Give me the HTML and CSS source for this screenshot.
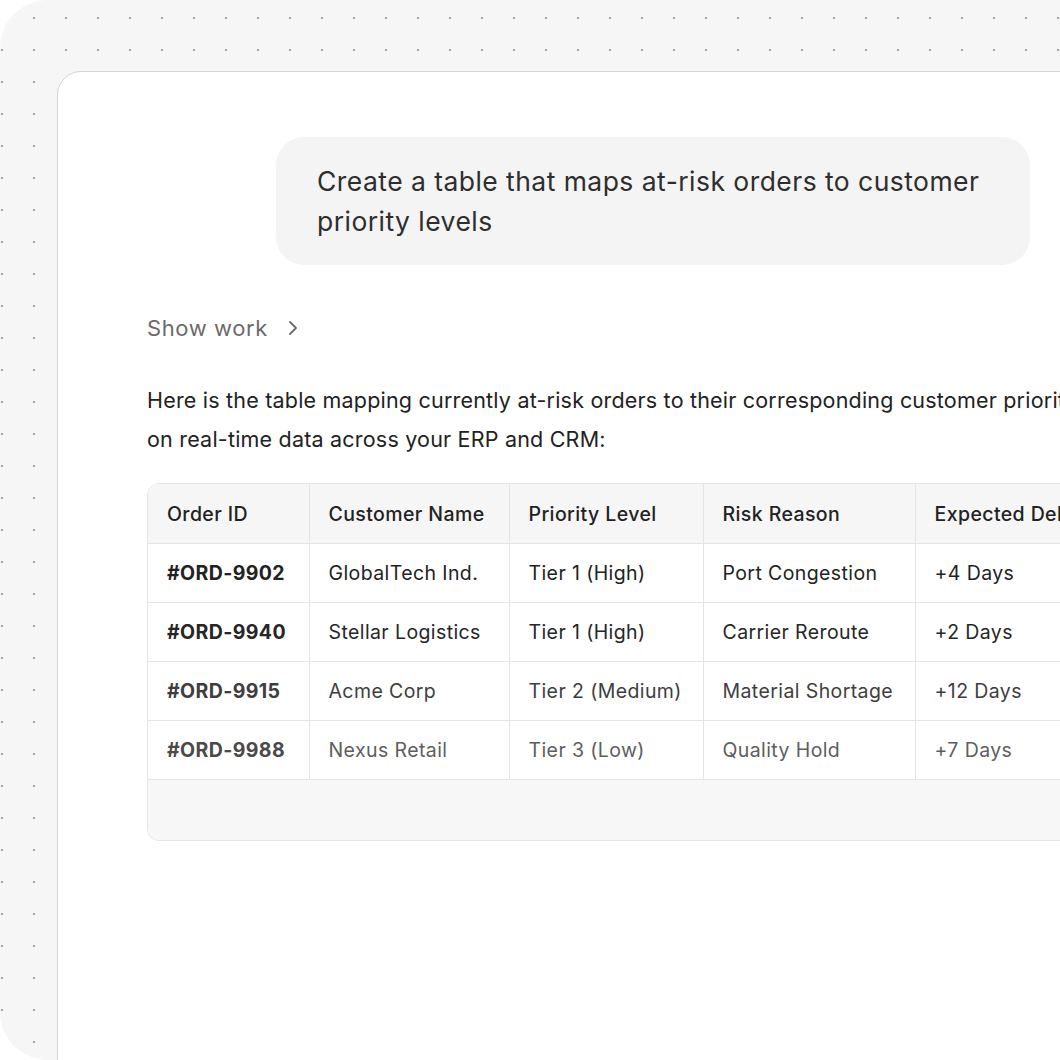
FILE: index.html
```html
<!DOCTYPE html>
<html>
<head>
<meta charset="utf-8">
<link rel="stylesheet" href="styles.css">
</head>
<body>
<div class="frame">
  <div class="card">
    <div class="bubble">Create a table that maps at-risk orders to customer priority levels</div>
    <div class="show-work">
      <span>Show work</span>
      <svg class="chev" width="10" height="16" viewBox="0 0 10 16"><path d="M2 2 L8 8 L2 14" fill="none" stroke="#6b6b6b" stroke-width="1.8" stroke-linecap="round" stroke-linejoin="round"/></svg>
    </div>
    <p class="answer">Here is the table mapping currently at-risk orders to their corresponding customer priority levels, based<br>on real-time data across your ERP and CRM:</p>
    <div class="table-wrap">
      <table class="orders">
        <colgroup>
          <col class="c1"><col class="c2"><col class="c3"><col class="c4"><col class="c5">
        </colgroup>
        <thead>
          <tr><th>Order ID</th><th>Customer Name</th><th>Priority Level</th><th>Risk Reason</th><th>Expected Delay</th></tr>
        </thead>
        <tbody>
          <tr class="r1"><td class="id">#ORD-9902</td><td>GlobalTech Ind.</td><td>Tier 1 (High)</td><td>Port Congestion</td><td>+4 Days</td></tr>
          <tr class="r2"><td class="id">#ORD-9940</td><td>Stellar Logistics</td><td>Tier 1 (High)</td><td>Carrier Reroute</td><td>+2 Days</td></tr>
          <tr class="r3"><td class="id">#ORD-9915</td><td>Acme Corp</td><td>Tier 2 (Medium)</td><td>Material Shortage</td><td>+12 Days</td></tr>
          <tr class="r4"><td class="id">#ORD-9988</td><td>Nexus Retail</td><td>Tier 3 (Low)</td><td>Quality Hold</td><td>+7 Days</td></tr>
        </tbody>
      </table>
      <div class="table-foot"></div>
    </div>
  </div>
</div>
</body>
</html>
```

FILE: styles.css
```css
* { box-sizing: border-box; }
html, body { margin: 0; padding: 0; background: #ffffff; }
body { font-family: Inter, "Noto Sans", "Liberation Sans", sans-serif; }

.frame {
  width: 1060px;
  height: 1060px;
  overflow: hidden;
  background-color: #f6f6f6;
  background-image: radial-gradient(circle, #a9a9a9 1.1px, rgba(169,169,169,0) 1.6px);
  background-size: 32px 32px;
  background-position: -14px 2px;
  border-radius: 48px 0 0 48px;
  padding: 71px 0 0 57px;
}

.card {
  width: 1200px;
  height: 1100px;
  background: #ffffff;
  border: 1px solid #d4d4d4;
  border-top-left-radius: 24px;
  padding: 65px 0 0 89px;
}

.bubble {
  margin-left: 129px;
  width: 754px;
  background: #f4f4f4;
  border-radius: 28px;
  padding: 24px 40px 24px 41px;
  font-size: 26.5px;
  line-height: 40px;
  color: #2e2e2e;
  letter-spacing: 0.45px;
}

.show-work {
  margin-top: 48px;
  display: flex;
  align-items: center;
  gap: 20px;
  font-size: 22px;
  line-height: 30px;
  color: #6b6b6b;
  letter-spacing: 0.6px;
}
.chev { display: block; }

.answer {
  margin: 38px 0 0 0;
  font-size: 21.5px;
  line-height: 39px;
  color: #222222;
  white-space: nowrap;
  letter-spacing: 0.2px;
}

.table-wrap {
  margin-top: 24px;
  width: 1100px;
  border: 1px solid #e4e4e4;
  border-radius: 12px;
  overflow: hidden;
  background: #f7f7f7;
}

.orders {
  border-collapse: collapse;
  width: 100%;
  table-layout: fixed;
  background: #ffffff;
}
.c1 { width: 161px; }
.c2 { width: 200px; }
.c3 { width: 194px; }
.c4 { width: 212px; }

.orders th, .orders td {
  height: 59px;
  padding: 1px 18px 0 19px;
  text-align: left;
  font-size: 19.5px;
  white-space: nowrap;
  letter-spacing: 0.4px;
  border-right: 1px solid #e4e4e4;
  border-bottom: 1px solid #e4e4e4;
}
.orders th {
  background: #f6f6f6;
  font-weight: 500;
  color: #222222;
}
.orders td { font-weight: 400; }
.orders td.id { font-weight: 700; }

.r1 td { color: #222222; }
.r2 td { color: #262626; }
.r3 td { color: #3e3e3e; }
.r4 td { color: #5e5e5e; }
.r4 td.id { color: #4a4a4a; }

.table-foot {
  height: 60px;
  background: #f7f7f7;
}
```
